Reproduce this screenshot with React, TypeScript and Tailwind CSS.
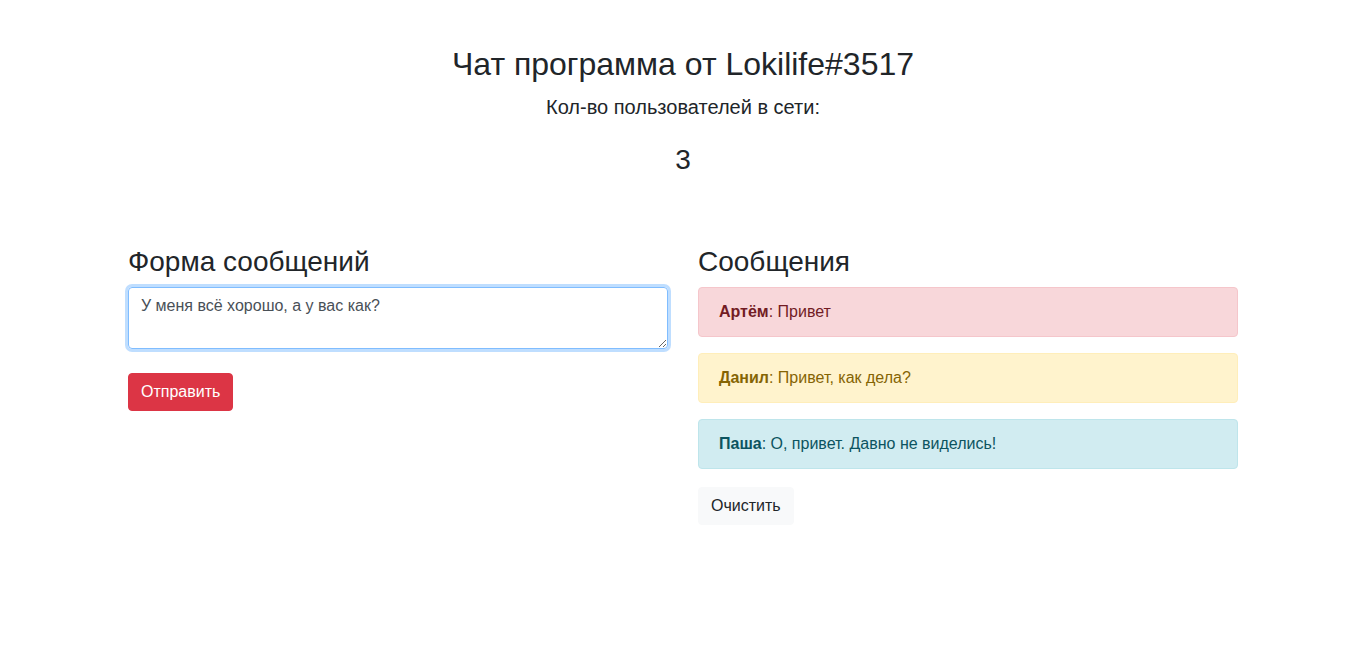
const messages = [
  {
    name: "Артём",
    text: "Привет",
    box: "bg-[#f8d7da] border-[#f5c6cb] text-[#721c24]",
  },
  {
    name: "Данил",
    text: "Привет, как дела?",
    box: "bg-[#fff3cd] border-[#ffeeba] text-[#856404]",
  },
  {
    name: "Паша",
    text: "О, привет. Давно не виделись!",
    box: "bg-[#d1ecf1] border-[#bee5eb] text-[#0c5460]",
  },
];

export default function App() {
  return (
    <div className="min-h-screen bg-white pl-[19px] font-['Liberation_Sans',Arial,sans-serif] text-[#212529]">
      <div className="text-center">
        <h2 className="pt-[45px] text-[32px] leading-[1.2]">
          Чат программа от Lokilife#3517
        </h2>
        <h5 className="mt-[12px] text-[20px] leading-[1.2]">
          Кол-во пользователей в сети:
        </h5>
        <h3 className="mt-[24px] text-[28px] leading-[1.2]">3</h3>
      </div>

      <div className="mx-auto mt-[68px] flex w-[1110px] gap-[30px]">
        <div className="w-[540px]">
          <h3 className="mb-2 text-[28px] leading-[1.2]">Форма сообщений</h3>
          <textarea
            rows={2}
            defaultValue="У меня всё хорошо, а у вас как?"
            className="block h-[62px] w-full rounded-[4px] border border-[#80bdff] px-3 py-1.5 text-base leading-6 text-[#495057] shadow-[0_0_0_3px_rgba(0,123,255,0.25)] outline-none"
          />
          <button className="mt-6 rounded-[4px] border border-[#dc3545] bg-[#dc3545] px-3 py-1.5 text-base leading-6 text-white">
            Отправить
          </button>
        </div>

        <div className="w-[540px]">
          <h3 className="mb-2 text-[28px] leading-[1.2]">Сообщения</h3>
          <div className="flex flex-col gap-4">
            {messages.map((m) => (
              <div
                key={m.name}
                className={`rounded-[4px] border px-5 py-3 text-base leading-6 ${m.box}`}
              >
                <b>{m.name}</b>: {m.text}
              </div>
            ))}
          </div>
          <button className="mt-[18px] rounded-[4px] border border-[#f8f9fa] bg-[#f8f9fa] px-3 py-1.5 text-base leading-6 text-[#212529]">
            Очистить
          </button>
        </div>
      </div>
    </div>
  );
}
